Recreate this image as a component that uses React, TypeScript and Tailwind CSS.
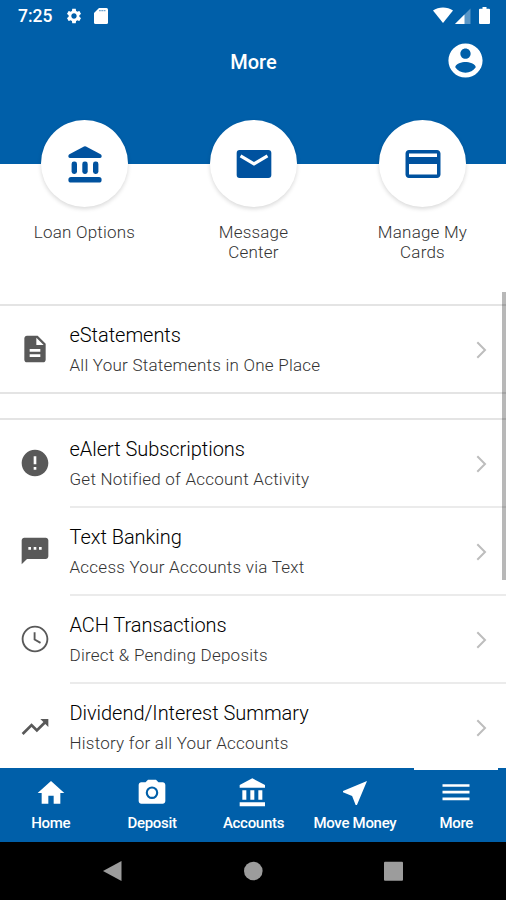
import type { ReactNode } from 'react';

type IconProps = {
  d: string;
  className?: string;
};

function Icon({ d, className }: IconProps) {
  return (
    <svg viewBox="0 0 24 24" fill="currentColor" className={className}>
      <path d={d} />
    </svg>
  );
}

const paths = {
  settings:
    'M19.14 12.94c.04-.3.06-.61.06-.94 0-.32-.02-.64-.07-.94l2.03-1.58c.18-.14.23-.41.12-.61l-1.92-3.32c-.12-.22-.37-.29-.59-.22l-2.39.96c-.5-.38-1.03-.7-1.62-.94l-.36-2.54c-.04-.24-.24-.41-.48-.41h-3.84c-.24 0-.43.17-.47.41l-.36 2.54c-.59.24-1.13.57-1.62.94l-2.39-.96c-.22-.08-.47 0-.59.22L2.74 8.87c-.12.21-.08.47.12.61l2.03 1.58c-.05.3-.09.63-.09.94s.02.64.07.94l-2.03 1.58c-.18.14-.23.41-.12.61l1.92 3.32c.12.22.37.29.59.22l2.39-.96c.5.38 1.03.7 1.62.94l.36 2.54c.05.24.24.41.48.41h3.84c.24 0 .44-.17.47-.41l.36-2.54c.59-.24 1.13-.56 1.62-.94l2.39.96c.22.08.47 0 .59-.22l1.92-3.32c.12-.22.07-.47-.12-.61l-2.01-1.58zM12 15.6c-1.98 0-3.6-1.62-3.6-3.6s1.62-3.6 3.6-3.6 3.6 1.62 3.6 3.6-1.62 3.6-3.6 3.6z',
  account:
    'M12 2C6.48 2 2 6.48 2 12s4.48 10 10 10 10-4.48 10-10S17.52 2 12 2zm0 3c1.66 0 3 1.34 3 3s-1.34 3-3 3-3-1.34-3-3 1.34-3 3-3zm0 14.2c-2.5 0-4.71-1.28-6-3.22.03-1.99 4-3.08 6-3.08 1.99 0 5.97 1.09 6 3.08-1.29 1.94-3.5 3.22-6 3.22z',
  card: 'M20 4H4c-1.11 0-1.99.89-1.99 2L2 18c0 1.11.89 2 2 2h16c1.11 0 2-.89 2-2V6c0-1.11-.89-2-2-2zm0 14H4v-6h16v6zm0-10H4V6h16v2z',
  document:
    'M14 2H6c-1.1 0-1.99.9-1.99 2L4 20c0 1.1.89 2 1.99 2H18c1.1 0 2-.9 2-2V8l-6-6zm2 16H8v-2h8v2zm0-4H8v-2h8v2zm-3-5V3.5L18.5 9H13z',
  alert:
    'M12 2C6.48 2 2 6.48 2 12s4.48 10 10 10 10-4.48 10-10S17.52 2 12 2zm1 15h-2v-2h2v2zm0-4h-2V7h2v6z',
  sms: 'M20 2H4c-1.1 0-1.99.9-1.99 2L2 22l4-4h14c1.1 0 2-.9 2-2V4c0-1.1-.9-2-2-2zM9 11H7V9h2v2zm4 0h-2V9h2v2zm4 0h-2V9h2v2z',
  clock:
    'M11.99 2C6.47 2 2 6.48 2 12s4.47 10 9.99 10C17.52 22 22 17.52 22 12S17.52 2 11.99 2zM12 20.6a8.6 8.6 0 1 1 0-17.2 8.6 8.6 0 0 1 0 17.2zm.4-13.6H11v5.8l4.8 2.7.7-1.2-4.1-2.3z',
  trending:
    'M16 6l2.29 2.29-4.88 4.88-4-4L2 16.59 3.41 18l6-6 4 4 6.3-6.29L22 12V6z',
  home: 'M10 20v-6h4v6h5v-8h3L12 3 2 12h3v8z',
  bank: 'M4 10v7h3v-7H4zm6 0v7h3v-7h-3zM2 22h19v-3H2v3zm14-12v7h3v-7h-3zm-4.5-9L2 6v2h19V6l-9.5-5z',
  send: 'M21 3L3 10.53v.98l6.84 2.65L12.48 21h.98L21 3z',
};

function CameraIcon() {
  return (
    <svg viewBox="0 0 24 24" className="size-8">
      <path
        fill="currentColor"
        d="M9 2L7.17 4H4c-1.1 0-2 .9-2 2v12c0 1.1.9 2 2 2h16c1.1 0 2-.9 2-2V6c0-1.1-.9-2-2-2h-3.17L15 2H9z"
      />
      <circle cx="12" cy="11.8" r="3.9" fill="none" stroke="#005fa9" strokeWidth="1.6" />
    </svg>
  );
}

function MenuIcon() {
  return (
    <svg viewBox="0 0 32 32" className="size-8" stroke="currentColor" strokeWidth="2.7">
      <path d="M2.5 8.5h27M2.5 15.2h27M2.5 21.8h27" />
    </svg>
  );
}

function MailIcon() {
  return (
    <svg viewBox="0 0 24 24" className="size-[42px]">
      <rect x="2.1" y="4" width="19.8" height="16" rx="1.7" fill="currentColor" />
      <path d="M4.300 7.300 12 11.900l7.700-4.600" fill="none" stroke="#fff" strokeWidth="1.8" />
    </svg>
  );
}

function LoanIcon() {
  return (
    <svg viewBox="0 0 36 38" width="36" height="38" fill="currentColor">
      <path d="M17 1.4q1-.5 2 0L33.6 9.2q1 .6 1 1.8v.6q0 1.4-1.4 1.4H2.8q-1.4 0-1.4-1.4V11q0-1.2 1-1.8z" />
      <rect x="4.6" y="16.6" width="5.4" height="12.4" rx="2.4" />
      <rect x="15.3" y="16.6" width="5.4" height="12.4" rx="2.4" />
      <rect x="26" y="16.6" width="5.4" height="12.4" rx="2.4" />
      <rect x="1.4" y="32" width="33.2" height="5.6" rx="2.6" />
    </svg>
  );
}

const shortcuts = [
  { label: 'Loan Options', icon: <LoanIcon /> },
  { label: 'Message Center', icon: <MailIcon /> },
  { label: 'Manage My Cards', icon: <Icon d={paths.card} className="size-[42px]" /> },
];

const services = [
  { title: 'eAlert Subscriptions', text: 'Get Notified of Account Activity', icon: paths.alert },
  { title: 'Text Banking', text: 'Access Your Accounts via Text', icon: paths.sms },
  { title: 'ACH Transactions', text: 'Direct & Pending Deposits', icon: paths.clock },
  { title: 'Dividend/Interest Summary', text: 'History for all Your Accounts', icon: paths.trending },
];

const tabs: { label: string; icon: ReactNode; active?: boolean }[] = [
  { label: 'Home', icon: <Icon d={paths.home} className="size-8" /> },
  { label: 'Deposit', icon: <CameraIcon /> },
  { label: 'Accounts', icon: <Icon d={paths.bank} className="size-8" /> },
  { label: 'Move Money', icon: <Icon d={paths.send} className="size-8" /> },
  { label: 'More', icon: <MenuIcon />, active: true },
];

type RowProps = {
  title: string;
  text: string;
  icon: string;
  divider?: boolean;
};

function Row({ title, text, icon, divider }: RowProps) {
  return (
    <div className={`flex shrink-0 pl-[19px] ${divider ? 'h-[88px]' : 'h-[86px]'}`}>
      <div className="flex h-[86px] w-[50.5px] items-center">
        <Icon d={icon} className="size-8 text-[#595959]" />
      </div>
      <div
        className={`flex flex-1 items-center justify-between pr-[19px] ${
          divider ? 'border-b-2 border-[#ebebeb]' : ''
        }`}
      >
        <div className="flex h-full flex-col pt-4 whitespace-nowrap">
          <span className="text-[20px] leading-[26px] font-light tracking-[-0.002em] text-black">
            {title}
          </span>
          <span className="mt-[6px] text-[17px] leading-[22px] font-light tracking-[0.014em] text-[#333]">
            {text}
          </span>
        </div>
        <svg
          width="11"
          height="18"
          viewBox="0 0 11 18"
          fill="none"
          stroke="#bdbdbd"
          strokeWidth="2"
          className="mt-[2px]"
        >
          <path d="M1.3 1.2 9 9l-7.7 7.8" />
        </svg>
      </div>
    </div>
  );
}

export default function More() {
  return (
    <div className="relative flex h-[900px] w-[506px] flex-col overflow-hidden bg-white font-['Roboto',sans-serif]">
      <header className="h-[164px] shrink-0 bg-[#005fa9] text-white">
        <div className="flex h-8 items-center justify-between pr-[15px] pl-[18px]">
          <div className="flex items-center">
            <span className="w-[47px] text-[17.5px] leading-8 font-medium">7:25</span>
            <Icon d={paths.settings} className="size-[18px]" />
            <svg width="14" height="16" viewBox="0 0 14 16" className="ml-[11px]">
              <path fill="currentColor" d="M5 0h7.5Q14 0 14 1.5v13q0 1.5-1.5 1.5h-11Q0 16 0 14.500V5z" />
              <path stroke="#005fa9" strokeWidth="1.2" strokeOpacity=".55" d="M5 2.6h7" strokeDasharray="1.8 .5" />
            </svg>
          </div>
          <svg width="58" height="18" viewBox="0 0 58 18" fill="currentColor" className="mt-[-1px]">
            <path d="M0 3.500C5.500-.4 14.500-.4 20 3.500L10 16z" />
            <path d="M22 17 37.500 1.500V17z" opacity=".35" />
            <path d="M22 17l9.500-9.500V17z" />
            <path d="M49.500 0h4v1.700H56q1 0 1 1V16q0 1-1 1h-9q-1 0-1-1V2.700q0-1 1-1h2.500z" />
          </svg>
        </div>
        <div className="grid h-[59px] grid-cols-3 items-center pl-px">
          <span className="col-start-2 text-center text-[20px] leading-6 font-medium">More</span>
          <Icon d={paths.account} className="mr-[20px] mb-[2px] size-[41px] justify-self-end" />
        </div>
      </header>

      <section className="-mt-[44px] -mr-px grid h-[184px] shrink-0 grid-cols-3">
        {shortcuts.map((item) => (
          <div key={item.label} className="flex flex-col items-center">
            <div className="z-10 flex size-[87px] shrink-0 items-center justify-center rounded-full bg-white text-[#00529f] shadow-[0_2px_4px_rgba(0,0,0,0.15)]">
              {item.icon}
            </div>
            <p className="mt-[15px] w-[120px] text-center text-[17px] leading-5 font-light tracking-[0.012em] text-[#333]">
              {item.label}
            </p>
          </div>
        ))}
      </section>

      <main className="flex h-[464px] shrink-0 flex-col overflow-hidden">
        <div className="border-y-2 border-[#e4e4e4]">
          <Row title="eStatements" text="All Your Statements in One Place" icon={paths.document} />
        </div>
        <div className="mt-6 border-t-2 border-[#e4e4e4]">
          {services.map((item, i) => (
            <Row key={item.title} {...item} divider={i < services.length - 1} />
          ))}
        </div>
      </main>

      <nav className="-mr-px grid h-[74px] shrink-0 grid-cols-5 bg-[#005fa9] text-white">
        {tabs.map((tab) => (
          <div key={tab.label} className="flex flex-col items-center">
            <div className={`h-[2px] w-[84px] ${tab.active ? 'bg-white' : ''}`} />
            <div className="mt-[7px]">{tab.icon}</div>
            <span className="mt-[5px] text-[15px] leading-[18px] font-medium tracking-[-0.02em] whitespace-nowrap">
              {tab.label}
            </span>
          </div>
        ))}
      </nav>

      <div className="flex flex-1 items-center justify-center bg-black">
        <svg width="302" height="20" viewBox="0 0 302 20" fill="#9c9c9c">
          <path d="M1 10 19.500 0v20z" />
          <circle cx="151.300" cy="10" r="9.300" />
          <rect x="282" y=".7" width="19" height="19" rx="1" />
        </svg>
      </div>

      {/* scroll thumb */}
      <div className="absolute top-[292px] right-0 h-[288px] w-1 bg-black/28" />
    </div>
  );
}
